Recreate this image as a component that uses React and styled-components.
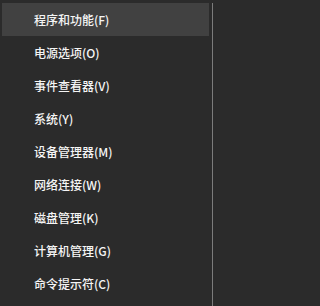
import React from "react";
import styled, { createGlobalStyle } from "styled-components";

const Global = createGlobalStyle`
  html, body { margin: 0; padding: 0; background: #2b2b2b; }
  #root { width: 215px; height: 306px; }
`;

const Menu = styled.div`
  box-sizing: border-box;
  width: 215px;
  height: 306px;
  background: #2b2b2b;
  border-right: 2px solid #2b2b2b;
  display: flex;
  padding: 3px 0 0 2px;
  font-family: "Microsoft YaHei", "Noto Sans CJK SC", "Noto Sans", sans-serif;
`;

const List = styled.div`
  flex: 1;
  display: flex;
  flex-direction: column;
  padding-right: 3px;
  border-right: 1px solid #7c7c7c;
`;

const Item = styled.div`
  height: 33px;
  display: flex;
  align-items: center;
  padding-left: 32px;
  font-size: 12px;
  font-weight: 500;
  color: #f5f5f5;
  background: ${(p) => (p.$active ? "#414141" : "transparent")};
  white-space: nowrap;
`;

const items = [
  "程序和功能(F)",
  "电源选项(O)",
  "事件查看器(V)",
  "系统(Y)",
  "设备管理器(M)",
  "网络连接(W)",
  "磁盘管理(K)",
  "计算机管理(G)",
  "命令提示符(C)",
];

export default function App() {
  return (
    <>
      <Global />
      <Menu>
        <List>
          {items.map((t, i) => (
            <Item key={t} $active={i === 0}>
              {t}
            </Item>
          ))}
        </List>
      </Menu>
    </>
  );
}
